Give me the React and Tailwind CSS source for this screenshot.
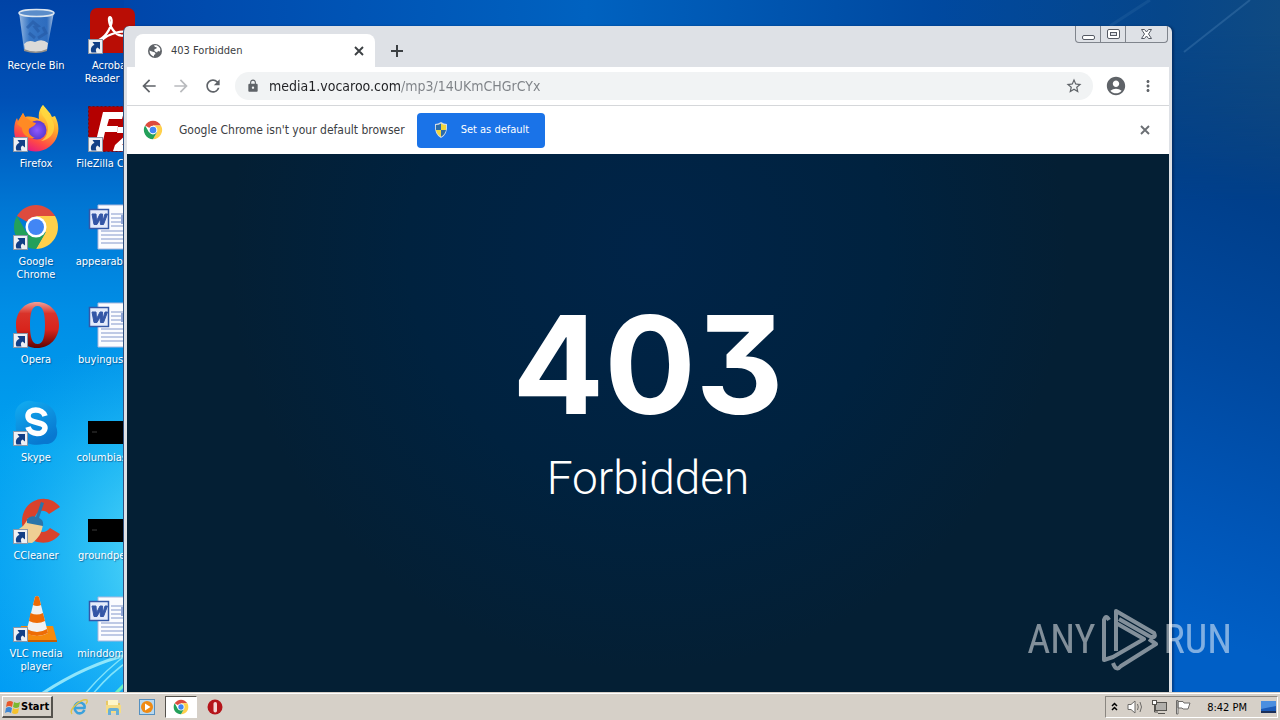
import React from "react";
import {
  MdArrowBack,
  MdArrowForward,
  MdRefresh,
  MdLock,
  MdStarBorder,
  MdAccountCircle,
  MdMoreVert,
} from "react-icons/md";

function Wallpaper() {
  return (
    <svg className="absolute inset-0 h-full w-full" viewBox="0 0 1280 692" preserveAspectRatio="none" aria-hidden="true">
      <defs>
        <linearGradient id="wl" x1="0" y1="0" x2="0" y2="1">
          <stop offset="0" stopColor="#0043a6" />
          <stop offset="0.14" stopColor="#0050b6" />
          <stop offset="0.3" stopColor="#0077d4" />
          <stop offset="0.45" stopColor="#008ee6" />
          <stop offset="0.65" stopColor="#00a1f0" />
          <stop offset="1" stopColor="#009cf4" />
        </linearGradient>
        <linearGradient id="wr" gradientUnits="userSpaceOnUse" x1="1280" y1="100" x2="1100" y2="600">
          <stop offset="0" stopColor="#083f7e" />
          <stop offset="0.2" stopColor="#003f8b" />
          <stop offset="0.5" stopColor="#0049a0" />
          <stop offset="0.8" stopColor="#0056b8" />
          <stop offset="1" stopColor="#005fc6" />
        </linearGradient>
        <linearGradient id="wt" gradientUnits="userSpaceOnUse" x1="124" y1="0" x2="1280" y2="0">
          <stop offset="0" stopColor="#0046aa" />
          <stop offset="0.4" stopColor="#0062c0" />
          <stop offset="0.7" stopColor="#0049a0" />
          <stop offset="0.9" stopColor="#06468a" />
          <stop offset="1" stopColor="#0f4a82" />
        </linearGradient>
        <linearGradient id="fade" x1="0" y1="0" x2="0" y2="1">
          <stop offset="0" stopColor="#fff" />
          <stop offset="0.15" stopColor="#fff" />
          <stop offset="1" stopColor="#000" />
        </linearGradient>
        <mask id="topMask">
          <rect x="124" width="1156" height="200" fill="url(#fade)" />
        </mask>
        <radialGradient id="glow" gradientUnits="userSpaceOnUse" cx="190" cy="560" r="240">
          <stop offset="0" stopColor="#7cf0fa" stopOpacity="0.9" />
          <stop offset="0.5" stopColor="#45d2f8" stopOpacity="0.5" />
          <stop offset="1" stopColor="#20b0f4" stopOpacity="0" />
        </radialGradient>
      </defs>
      <rect width="640" height="692" fill="url(#wl)" />
      <rect width="640" height="692" fill="url(#glow)" />
      <rect x="640" width="640" height="692" fill="url(#wr)" />
      <rect x="124" width="1156" height="200" fill="url(#wt)" mask="url(#topMask)" />
      <path d="M40 695Q85 665 130 654" stroke="#aef4fd" strokeWidth="3" fill="none" opacity="0.8" />
      <path d="M84 695Q105 670 130 652M92 695Q110 673 130 660" stroke="#9af0fc" strokeWidth="1.500" fill="none" opacity="0.8" />
      <path d="M114 695L130 679" stroke="#6df0c0" strokeWidth="3" />
      <path d="M1184 52L1250 0" stroke="#5a8fc0" strokeWidth="2" opacity="0.3" />
      <path d="M1110 26L1150 0" stroke="#5a8fc0" strokeWidth="3" opacity="0.15" />
    </svg>
  );
}

function ShortcutArrow() {
  return (
    <svg className="absolute bottom-0 left-0 h-4 w-4" viewBox="0 0 16 16" aria-hidden="true">
      <rect x="1.500" y="0.5" width="14" height="14" fill="#eef0f4" stroke="#8a97a8" />
      <path d="M4.500 13.500C3 10 4.500 6.500 7.500 6L5.500 3H13V10.500L10.500 8.500C8.500 9.500 8.500 11.500 9.500 13.500Z" fill="#123f86" />
    </svg>
  );
}

function RecycleIcon() {
  return (
    <svg viewBox="0 0 48 48" className="h-12 w-12">
      <defs>
        <linearGradient id="bin" x1="0" x2="1">
          <stop offset="0" stopColor="#cfe2f6" stopOpacity="0.75" />
          <stop offset="0.3" stopColor="#5d96d6" stopOpacity="0.6" />
          <stop offset="0.8" stopColor="#4d86cc" stopOpacity="0.6" />
          <stop offset="1" stopColor="#dfeaf6" stopOpacity="0.8" />
        </linearGradient>
      </defs>
      <path d="M7 5L12 43Q24 48 35 43L42 5Z" fill="url(#bin)" />
      <path d="M12 37Q16 32 23 35Q30 31 36 36L35 43Q24 47 13 43Z" fill="#dcdad8" />
      <path d="M12 42Q24 47 35 42V44Q24 48 12 44Z" fill="#958f88" />
      <path d="M15 21l6-6 5 4-3 1 4 5M31 20l3 6-8 5M17 26l6 5" stroke="#2458a4" strokeWidth="3" fill="none" opacity="0.6" />
      <ellipse cx="24.500" cy="6" rx="17.500" ry="3.500" fill="#5b8dca" stroke="#dce6f0" strokeWidth="1.500" />
    </svg>
  );
}

function AcrobatIcon() {
  return (
    <svg viewBox="0 0 48 48" className="h-12 w-12">
      <rect x="3" y="1" width="45" height="45" rx="7" fill="#b90d05" />
      <path d="M12 33C19 30 27 17 24 11C21 7 21 17 26 23C31 30 39 30 39 26C38 22 21 27 15 33C12 37 9 35 12 33Z" fill="none" stroke="#fff" strokeWidth="2.300" />
    </svg>
  );
}

function FirefoxIcon() {
  return (
    <svg viewBox="0 0 48 48" className="h-12 w-12">
      <defs>
        <linearGradient id="ff" x1="0.8" y1="0" x2="0.3" y2="1">
          <stop offset="0" stopColor="#fff44f" />
          <stop offset="0.4" stopColor="#ffa52b" />
          <stop offset="0.75" stopColor="#ff4a45" />
          <stop offset="1" stopColor="#e31587" />
        </linearGradient>
        <radialGradient id="ffc">
          <stop offset="0" stopColor="#9059ff" />
          <stop offset="1" stopColor="#5b3ad0" />
        </radialGradient>
      </defs>
      <path d="M31 0C34 4 38 7 40 12L43 11C49 22 47 35 37 42C27 50 10 47 4 35C1 28 2 17 5 13L6 16L11 8L13 12C18 11 23 12 27 14C26 8 28 3 31 0Z" fill="url(#ff)" />
      <circle cx="25" cy="25" r="9.500" fill="url(#ffc)" />
      <path d="M13 12C17 14 18 17 24 18C23 21 19 22 17 24C16 28 18 31 23 33C15 34 10 29 10 23L5 19L11 8Z" fill="#ff8a24" />
      <path d="M31 11C38 18 38 31 29 36C37 35 43 29 42 20C41 13 34 9 31 0C28 4 29 8 31 11Z" fill="#ffd83f" opacity="0.8" />
    </svg>
  );
}

function FileZillaIcon() {
  return (
    <svg viewBox="0 0 48 48" className="h-12 w-12">
      <rect x="1.500" y="1.500" width="46" height="45" fill="#b40000" stroke="#720d12" strokeDasharray="2 2" />
      <path d="M16 7H37L35 14H22L20 21H31L30 27H18L15 40H8ZM31 22H48V27L35 40H48V46H26L28 40L41 28H30Z" fill="#fff" />
    </svg>
  );
}

function ChromeIcon({ className }) {
  return (
    <svg viewBox="0 0 48 48" className={className}>
      <path d="M24 24L4.950 13A22 22 0 0 1 43.050 13L24 13Z" fill="#dd4b3e" />
      <path d="M24 24L43.050 13A22 22 0 0 1 24 46L33.500 29.500L24 13H43.050Z" fill="#ffd04b" />
      <path d="M24 24L33.500 29.500L24 46A22 22 0 0 1 4.950 13L14.500 29.500Z" fill="#23a05a" />
      <circle cx="24" cy="24" r="10.500" fill="#fff" />
      <circle cx="24" cy="24" r="8" fill="#4286f5" />
    </svg>
  );
}

function OperaIcon({ className }) {
  return (
    <svg viewBox="0 0 48 48" className={className}>
      <defs>
        <linearGradient id="op" x1="0" y1="0" x2="0" y2="1">
          <stop offset="0" stopColor="#f0a098" />
          <stop offset="0.25" stopColor="#d9332a" />
          <stop offset="0.6" stopColor="#d8241c" />
          <stop offset="1" stopColor="#5e0303" />
        </linearGradient>
      </defs>
      <path fillRule="evenodd" d="M25 1C38 1 47 11 47 24S38 47 25 47S4 37 4 24S12 1 25 1ZM25.500 5C20 5 18 12 18 24S20 43 25.500 43S33 36 33 24S31 5 25.500 5Z" fill="url(#op)" />
    </svg>
  );
}

function SkypeIcon() {
  return (
    <svg viewBox="0 0 48 48" className="h-12 w-12">
      <defs>
        <linearGradient id="sk" x1="0" y1="0" x2="0.5" y2="1">
          <stop offset="0" stopColor="#12aef2" />
          <stop offset="1" stopColor="#0878d0" />
        </linearGradient>
      </defs>
      <path d="M15 2C20 1 22 3 25 3C38 3 47 13 44 27C48 37 42 46 32 45C14 49 1 38 4 22C1 13 5 4 15 2Z" fill="url(#sk)" />
      <path d="M33 17C31 9 16 9 16 17C16 26 33 21 33 29C32 37 18 36 16 28" fill="none" stroke="#fff" strokeWidth="5.500" />
    </svg>
  );
}

function CCleanerIcon() {
  return (
    <svg viewBox="0 0 48 48" className="h-12 w-12">
      <path d="M48 10L37 17C31 10 22 15 22 25C22 34 32 39 38 31L48 37C38 52 11 47 10 26C9 2 36 -6 48 10Z" fill="#d9422c" />
      <path d="M2 34C10 32 14 26 16 21L31 27C30 36 26 42 20 46L5 45Z" fill="#efcf94" />
      <path d="M15 22Q19 18 24 20L29 5L32 6L27 21Q32 23 31 29L15 26Z" fill="#2a75aa" />
    </svg>
  );
}

function VlcIcon() {
  return (
    <svg viewBox="0 0 48 48" className="h-12 w-12">
      <path d="M9 31H41L45 46H5Z" fill="#f58a0c" />
      <path d="M5 45H45V47H5Z" fill="#c65e04" />
      <path d="M23 2Q25 0 27 2L36 38Q26 44 14 38Z" fill="#f1f1f1" />
      <path d="M23 2Q25 0 27 2L29 10Q25 12 21 10ZM18.500 18Q25 21 31 18L33 26Q25 30 17 26ZM15 34Q25 40 35 34L36 38Q25 44 14 38Z" fill="#ee6c05" />
    </svg>
  );
}

function WordIcon() {
  return (
    <svg viewBox="0 0 48 48" className="h-12 w-12">
      <path d="M11 2H48V46H11Z" fill="#fbfcff" stroke="#a9b7dc" />
      <path d="M24 11H46M24 15H46M24 19H46M24 23H46M14 28H46M14 32H46M14 36H46M14 40H46" stroke="#8297cb" />
      <rect x="34" y="12" width="9" height="9" fill="#8da2d4" />
      <rect x="2.500" y="6.500" width="19" height="19" fill="#e4ebfb" stroke="#3458a7" strokeWidth="1.500" />
      <path d="M5 11H9L9.500 18L13 11H15.500L16 18L18 11H20.500L16.500 21.500H13.500L13 16L10 21.500H7Z" fill="#3356a6" stroke="#3356a6" />
    </svg>
  );
}

function PictureIcon() {
  return (
    <svg viewBox="0 0 48 48" className="h-12 w-12">
      <rect x="1" y="22" width="47" height="23" fill="#000" />
      <path d="M5 33H10" stroke="#3a3a3a" />
    </svg>
  );
}

const shortcuts = [
  [
    { name: "Recycle Bin", icon: <RecycleIcon /> },
    { name: "Firefox", icon: <FirefoxIcon />, link: true },
    { name: "Google\nChrome", icon: <ChromeIcon className="h-12 w-12" />, link: true },
    { name: "Opera", icon: <OperaIcon className="h-12 w-12" />, link: true },
    { name: "Skype", icon: <SkypeIcon />, link: true },
    { name: "CCleaner", icon: <CCleanerIcon />, link: true },
    { name: "VLC media\nplayer", icon: <VlcIcon />, link: true },
  ],
  [
    { name: "Acrobat\nReader DC", icon: <AcrobatIcon />, link: true },
    { name: "FileZilla Client", icon: <FileZillaIcon />, link: true },
    { name: "appearable.rtf", icon: <WordIcon /> },
    { name: "buyingush.rtf", icon: <WordIcon /> },
    { name: "columbias.jpg", icon: <PictureIcon /> },
    { name: "groundpe.jpg", icon: <PictureIcon /> },
    { name: "minddoma.rtf", icon: <WordIcon /> },
  ],
];

function DesktopIcons() {
  return (
    <div className="relative flex gap-[3px]">
      {shortcuts.map((column, i) => (
        <ul key={i} className="flex w-[72px] flex-col">
          {column.map((item) => (
            <li key={item.name} className="flex h-[98px] flex-col items-center gap-1 pt-[7px]">
              <div className="relative h-12 w-12">
                {item.icon}
                {item.link && <ShortcutArrow />}
              </div>
              <span className="whitespace-pre text-center text-[11px] leading-[13px] text-white [text-shadow:1px_1px_1px_rgb(0_40_90/0.5)]">
                {item.name}
              </span>
            </li>
          ))}
        </ul>
      ))}
    </div>
  );
}

function GlobeIcon() {
  return (
    <svg viewBox="0 0 16 16" className="h-4 w-4" aria-hidden="true">
      <circle cx="8" cy="8" r="7" fill="#5f6368" />
      <path d="M7 2.500C9 2 11 2.500 12 4C13.500 5 13.500 7 13 8.500L11 8L10 9.500L8 8.500L7 7L8 6L9.500 5.500L9.500 4L8 4ZM2.500 7.500L5 8.500L8 9.500L8.500 11L7 12L7 13.500C4.500 13 2.500 10.500 2.500 7.500Z" fill="#fff" />
    </svg>
  );
}

function CrossIcon({ className }) {
  return (
    <svg viewBox="0 0 16 16" className={className} aria-hidden="true">
      <path d="M4 4L12 12M12 4L4 12" stroke="currentColor" strokeWidth="1.900" />
    </svg>
  );
}

function PlusIcon() {
  return (
    <svg viewBox="0 0 20 20" className="h-5 w-5 text-[#3c4043]" aria-hidden="true">
      <path d="M10 4V16M4 10H16" stroke="currentColor" strokeWidth="2" />
    </svg>
  );
}

function ShieldIcon() {
  return (
    <svg viewBox="0 0 16 16" className="h-4 w-4" aria-hidden="true">
      <path d="M8 0Q11 2 14 2Q15 12 8 16Q1 12 2 2Q5 2 8 0Z" fill="#d4dce4" />
      <path d="M8 1.500V8H3Q2.800 5 3 3Q6 3 8 1.500ZM8 8H13Q12 12.500 8 14.700Z" fill="#2c6ca8" />
      <path d="M8 1.500Q10 3 13 3Q13.200 5 13 8H8ZM3 8H8V14.700Q4 12.500 3 8Z" fill="#f2d53c" />
    </svg>
  );
}

function WindowControls() {
  return (
    <div className="flex h-[17px] rounded-b border border-t-0 border-[#7f848c]">
      <button aria-label="Minimize" className="flex w-[25px] items-center justify-center border-r border-[#7f848c]">
        <svg viewBox="0 0 13 13" className="h-[13px] w-[13px]">
          <rect x="0.5" y="7.500" width="12" height="4" rx="1.500" fill="#fff" stroke="#555a64" />
        </svg>
      </button>
      <button aria-label="Restore" className="flex w-[25px] items-center justify-center border-r border-[#7f848c]">
        <svg viewBox="0 0 13 13" className="h-[13px] w-[13px]">
          <rect x="0.5" y="1.500" width="12" height="9" rx="1.500" fill="#fff" stroke="#555a64" />
          <rect x="3.500" y="4.500" width="6" height="3" fill="#dee1e6" stroke="#555a64" />
        </svg>
      </button>
      <button aria-label="Close" className="flex w-[41px] items-center justify-center">
        <svg viewBox="0 0 13 13" className="h-[13px] w-[13px]">
          <path d="M1.500 1.500H4.500L6.500 4L8.500 1.500H11.500L8.500 6L11.500 10.500H8.500L6.500 8L4.500 10.500H1.500L4.500 6Z" fill="#fff" stroke="#555a64" />
        </svg>
      </button>
    </div>
  );
}

function BrowserWindow() {
  return (
    <section
      aria-label="Google Chrome"
      className="absolute bottom-0 left-[123px] right-[108px] top-[26px] flex flex-col rounded-t-md border-l border-[#31517e] bg-[#dee1e6] px-[3px] shadow-[2px_0_2px_rgb(0_20_60/0.4)]"
    >
      <header className="flex h-[41px] items-end justify-between pl-2 pr-px">
        <div className="flex items-center gap-3">
          <div className="mt-2 flex h-[33px] w-60 items-center gap-2 rounded-t-lg bg-white pl-3 pr-2">
            <GlobeIcon />
            <span className="flex-1 text-[11px] leading-none text-[#3c4043]">403 Forbidden</span>
            <button aria-label="Close tab">
              <CrossIcon className="h-4 w-4 text-[#3c4043]" />
            </button>
          </div>
          <button aria-label="New tab" className="mt-2">
            <PlusIcon />
          </button>
        </div>
        <div className="self-start">
          <WindowControls />
        </div>
      </header>

      <nav className="flex h-[39px] items-center gap-3 border-b border-[#d5d7da] bg-white px-3">
        <button aria-label="Back">
          <MdArrowBack className="h-5 w-5 text-[#5f6368]" />
        </button>
        <button aria-label="Forward">
          <MdArrowForward className="h-5 w-5 text-[#b9bbbe]" />
        </button>
        <button aria-label="Reload">
          <MdRefresh className="h-5 w-5 text-[#5f6368]" />
        </button>
        <div className="flex h-7 flex-1 items-center gap-2 rounded-full bg-[#f1f3f4] px-2.5">
          <MdLock className="h-4 w-4 p-px text-[#5f6368]" />
          <input
            aria-label="Address"
            defaultValue="media1.vocaroo.com/mp3/14UKmCHGrCYx"
            className="min-w-0 flex-1 bg-[linear-gradient(90deg,#202124_131px,#7d8186_131px)] bg-clip-text text-[14px] text-transparent outline-none"
          />
          <button aria-label="Bookmark this page">
            <MdStarBorder className="h-[18px] w-[18px] text-[#5f6368]" />
          </button>
        </div>
        <button aria-label="Profile">
          <MdAccountCircle className="h-[22px] w-[22px] text-[#5f6368]" />
        </button>
        <button aria-label="More">
          <MdMoreVert className="h-[18px] w-[18px] text-[#5f6368]" />
        </button>
      </nav>

      <div className="flex h-12 items-center gap-3 bg-white px-4">
        <ChromeIcon className="h-5 w-5" />
        <p className="pl-1 text-[12px] text-[#3c4043]">Google Chrome isn't your default browser</p>
        <button className="flex h-[35px] items-center gap-3 rounded bg-[#1a73e8] px-4 text-[11px] text-white">
          <ShieldIcon />
          Set as default
        </button>
        <button aria-label="Dismiss" className="ml-auto">
          <CrossIcon className="h-4 w-4 text-[#6b6f74]" />
        </button>
      </div>

      <main className="flex flex-1 flex-col items-center justify-center gap-5 bg-[radial-gradient(circle_at_50%_18%,#002448_0,#00223f_240px,#041f34_420px)] pb-10 text-white">
        <h1 className="text-[136px] font-bold leading-[130px] [font-family:Inter,sans-serif] [font-feature-settings:'cv09']">403</h1>
        <p className="text-[46px] font-light leading-[56px] [font-family:Roboto,sans-serif]">Forbidden</p>
      </main>
    </section>
  );
}

function Watermark() {
  return (
    <div className="absolute bottom-5 right-12 flex items-center gap-1.5 text-[40px] font-normal leading-none text-white opacity-50 [font-family:'Roboto_Condensed','Liberation_Sans_Narrow',sans-serif]">
      <span>ANY</span>
      <svg viewBox="0 0 56 64" className="h-16 w-14" aria-hidden="true">
        <path d="M7 12Q4 6 2 12V52L11 49L42 31L14 15M14 43V3L52 25Q55 31 47 28L17 11M11 55Q14 64 19 58L54 36L47 31" fill="none" stroke="currentColor" strokeWidth="4" strokeLinejoin="round" />
      </svg>
      <span>RUN</span>
    </div>
  );
}

function StartLogo() {
  return (
    <svg viewBox="0 0 16 16" className="h-4 w-4" aria-hidden="true">
      <path d="M2 3Q5 1 8 3L7 8Q4 6 1 8Z" fill="#e8582a" />
      <path d="M9 3Q12 5 15 3L14 8Q11 10 8 8Z" fill="#7cb82f" />
      <path d="M1 9Q4 7 7 9L6 14Q3 12 0 14Z" fill="#3e87d4" />
      <path d="M8 9Q11 11 14 9L13 14Q10 16 7 14Z" fill="#f6c22c" />
    </svg>
  );
}

function IeIcon() {
  return (
    <svg viewBox="0 0 20 20" className="h-5 w-5">
      <path d="M15.500 13Q13 17.500 8.500 16Q4.500 13 6 8.500Q9 4 13 6Q16.500 8 15.500 11H6" fill="none" stroke="#3ba1dc" strokeWidth="2.500" />
      <path d="M3 17Q0 14 7 7.500Q14 1.500 18 3Q19 5 17 7" fill="none" stroke="#e2c443" strokeWidth="1.500" />
    </svg>
  );
}

function FolderIcon() {
  return (
    <svg viewBox="0 0 20 20" className="h-5 w-5">
      <path d="M3 4H8L9 6H17V15H3Z" fill="#e8c864" />
      <path d="M5 3H15V8H5Z" fill="#fff6c8" />
      <path d="M3 8H18V16H3Z" fill="#f5dc86" />
      <path d="M5 18V13Q5 11 7 11H14Q16 11 16 13V18H13V14H8V18Z" fill="#68afd6" />
    </svg>
  );
}

function PlayerIcon() {
  return (
    <svg viewBox="0 0 20 20" className="h-5 w-5">
      <rect x="2.500" y="2.500" width="15" height="15" fill="#b8d8ef" stroke="#5590c0" />
      <circle cx="10" cy="10" r="6" fill="#ef8a13" />
      <path d="M8 6.500L13.500 10L8 13.500Z" fill="#fff" />
    </svg>
  );
}

function TaskbarOpera() {
  return (
    <svg viewBox="0 0 20 20" className="h-5 w-5">
      <circle cx="10" cy="10" r="7.500" fill="#b5141a" />
      <rect x="8.500" y="5" width="3.500" height="10.500" rx="1.700" fill="#f4d5d5" />
    </svg>
  );
}

function Taskbar() {
  return (
    <footer className="relative flex h-7 items-center justify-between border-t border-[#d6d0c8] bg-[#d6d0c8] shadow-[inset_0_1px_0_#fff]">
      <div className="flex items-center gap-4 pl-0.5">
        <button className="mt-px flex h-[22px] items-center border border-b-2 border-r-2 border-white border-b-[#55524d] border-r-[#55524d] px-0.5 text-[11px] font-bold leading-none text-black">
          <StartLogo />
          Start
        </button>
        <div className="flex items-center gap-3.5">
          <button aria-label="Internet Explorer"><IeIcon /></button>
          <button aria-label="Windows Explorer"><FolderIcon /></button>
          <button aria-label="Media Player"><PlayerIcon /></button>
        </div>
        <div className="-ml-2 flex items-center gap-2">
          <button aria-label="Chrome" className="flex h-[22px] w-8 items-center justify-center border border-b-white border-l-[#55524d] border-r-white border-t-[#55524d] bg-white">
            <ChromeIcon className="h-4 w-4" />
          </button>
          <button aria-label="Opera"><TaskbarOpera /></button>
        </div>
      </div>
      <div className="mr-0.5 mt-px flex h-[22px] items-center gap-2 border border-b-white border-l-[#8a8680] border-r-white border-t-[#8a8680] pl-1 text-[11px] leading-none text-black">
        <svg viewBox="0 0 9 14" className="h-3.5 w-[9px]" aria-hidden="true">
          <path d="M2 6L4.500 3.500L7 6M2 10L4.500 7.500L7 10" fill="none" stroke="#000" strokeWidth="1.500" />
        </svg>
        <svg viewBox="0 0 16 16" className="h-4 w-4" aria-hidden="true">
          <path d="M1 5.500H4L8 2V14L4 10.500H1Z" fill="#fff" stroke="#6d6b68" />
          <path d="M10.500 5Q12 8 10.500 11M13 3Q16 8 13 13" fill="none" stroke="#6d6b68" />
        </svg>
        <svg viewBox="0 0 16 16" className="h-4 w-4" aria-hidden="true">
          <rect x="4.500" y="3.500" width="11" height="8" fill="#b0aeaa" stroke="#55534f" />
          <path d="M7 14.500H14M3.500 5V13H7" fill="none" stroke="#55534f" />
          <rect x="1.500" y="1.500" width="4" height="4" fill="#fff" stroke="#55534f" />
        </svg>
        <svg viewBox="0 0 16 16" className="h-4 w-4" aria-hidden="true">
          <path d="M1.500 1.500H3V15H1.500ZM3 2.500H8L9 4H15L13 10H8L7 9H3Z" fill="#fff" stroke="#6d6b68" />
        </svg>
        <time className="pl-2 pr-1">8:42 PM</time>
        <svg viewBox="0 0 18 16" className="h-4 w-[18px]" aria-hidden="true">
          <path d="M2 2H17V12H2Z" fill="#1b5bb8" />
          <path d="M2 2H17V7L2 10Z" fill="#4b8fe0" />
          <path d="M2 12H17V14H2Z" fill="#1b2f58" />
        </svg>
      </div>
    </footer>
  );
}

export default function App() {
  return (
    <div className="flex h-screen flex-col overflow-hidden [font-family:'DejaVu_Sans_Condensed','DejaVu_Sans',sans-serif]">
      <div className="relative min-h-0 flex-1 overflow-hidden">
        <Wallpaper />
        <DesktopIcons />
        <BrowserWindow />
        <Watermark />
      </div>
      <Taskbar />
    </div>
  );
}
